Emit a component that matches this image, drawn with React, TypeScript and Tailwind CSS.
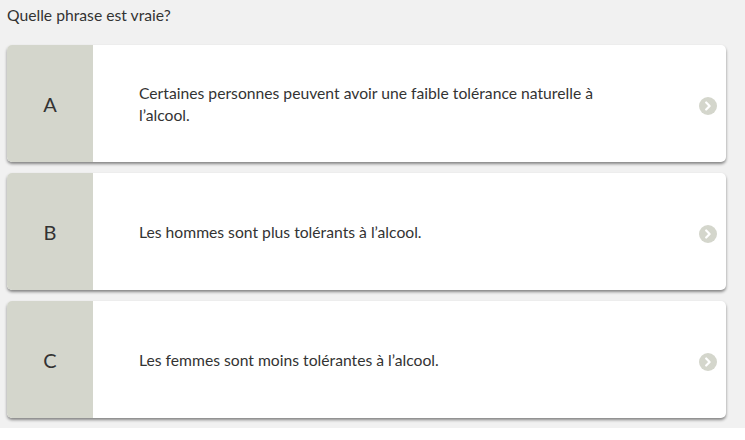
const options = [
  { letter: 'A', text: 'Certaines personnes peuvent avoir une faible tolérance naturelle à l’alcool.' },
  { letter: 'B', text: 'Les hommes sont plus tolérants à l’alcool.' },
  { letter: 'C', text: 'Les femmes sont moins tolérantes à l’alcool.' },
];

function Chevron() {
  return (
    <span className="flex h-[18px] w-[18px] items-center justify-center rounded-full bg-[#d4d6cc]">
      <svg width="8" height="10" viewBox="0 0 8 10" fill="none">
        <path d="M2.2 1.5 L5.6 5 L2.2 8.5" stroke="white" strokeWidth="2.2" strokeLinecap="round" strokeLinejoin="round" />
      </svg>
    </span>
  );
}

export default function App() {
  return (
    <div className="h-[428px] bg-[#f1f1f1] pl-[7px] pr-[19px] pt-[4px] text-[#333333]" style={{ fontFamily: 'Lato, "Open Sans", sans-serif' }}>
      <p className="text-[15.7px] leading-[22px]">Quelle phrase est vraie?</p>
      <div className="mt-[19px] flex flex-col gap-[11px]">
        {options.map((o) => (
          <button
            key={o.letter}
            type="button"
            className="flex h-[117px] w-full overflow-hidden rounded-[5px] bg-white text-left shadow-[0_2px_3px_rgba(0,0,0,0.45)]"
          >
            <div className="flex w-[86px] shrink-0 items-center justify-center bg-[#d4d6cc] text-[20px] text-[#333333]">
              {o.letter}
            </div>
            <div className="flex flex-1 items-center pl-[46px] pr-[9px]">
              <p className="w-[490px] text-[15.7px] leading-[22px] text-[#333333]">{o.text}</p>
              <div className="ml-auto mt-[4px]">
                <Chevron />
              </div>
            </div>
          </button>
        ))}
      </div>
    </div>
  );
}
